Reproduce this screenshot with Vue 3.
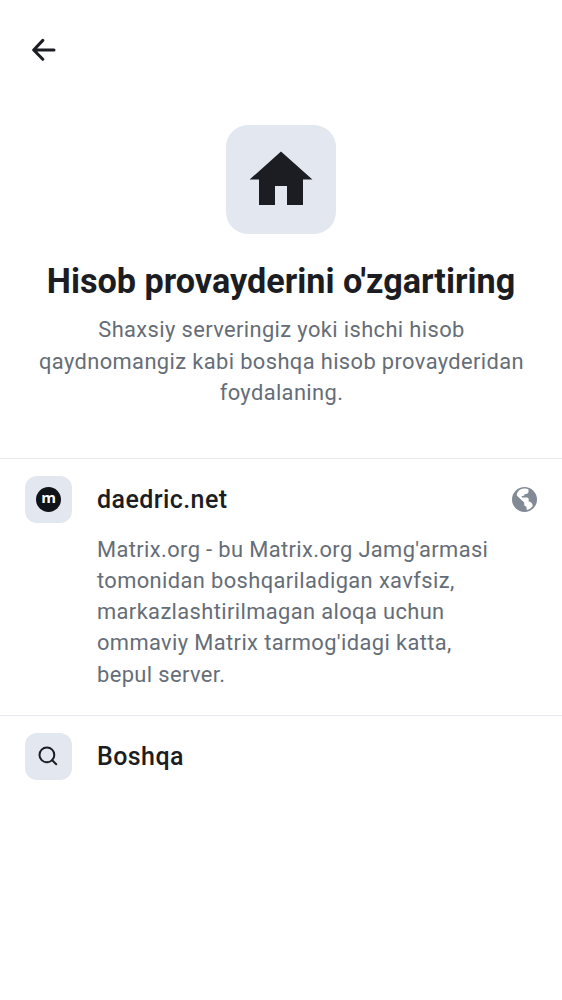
<script setup>
const description = "Matrix.org - bu Matrix.org Jamg'armasi tomonidan boshqariladigan xavfsiz, markazlashtirilmagan aloqa uchun ommaviy Matrix tarmog'idagi katta, bepul server."
</script>

<template>
  <main class="screen">
    <header class="bar">
      <svg class="back" viewBox="0 0 24 24"><path d="M10.8 2.4 1.7 12l9.1 9.3M2 12H22" /></svg>
    </header>
    <section class="hero">
      <div class="tile">
        <svg viewBox="0 0 64 54"><path d="M32 .5.6 28.6H10v25.3h16v-19h12v19h16V28.6h9.4z" /></svg>
      </div>
      <h1>Hisob provayderini o'zgartiring</h1>
      <p>Shaxsiy serveringiz yoki ishchi hisob qaydnomangiz kabi boshqa hisob provayderidan foydalaning.</p>
    </section>
    <section class="row first">
      <div class="icon"><span class="logo">m</span></div>
      <div class="body">
        <h2>daedric.net</h2>
        <p>{{ description }}</p>
      </div>
      <svg class="globe" viewBox="0 0 25 25"><circle cx="12.5" cy="12.5" r="12.5" /><path d="M4.7 8.3C5 5 7.5 1.8 12 1.6c2-.1 3.4.3 4.5 1v2.2c-.2 1.5-1 2-2.3 2.1l-1.8.3v1.4l-2.9.7.5 1.3h4.7c1.4 0 2 .8 2 2v1.8c1.7.2 2.8 1 3.5 2.6l.6 2c-1.4 2-3.3 3.3-6 3.9l-.4-3.2c-1.7-.2-2.2-1.1-2.2-2.6v-1.6L5.8 9.5z" /></svg>
    </section>
    <section class="row">
      <div class="icon"><svg class="search" viewBox="0 0 20 20"><circle cx="8.9" cy="8.9" r="7.4" /><path d="m14.2 14.2 4 4" /></svg></div>
      <div class="body"><h2>Boshqa</h2></div>
    </section>
  </main>
</template>

<style>
body { background: #fff; }
</style>
<style scoped>
.screen { height: 1000px; font-family: Roboto, sans-serif; color: #1b1d22; background: #fff; overflow: hidden; }
.bar { height: 100px; box-sizing: border-box; padding: 38px 0 0 32px; }
.back { display: block; width: 24px; height: 24px; fill: none; stroke: #1b1d22; stroke-width: 3; stroke-linecap: round; stroke-linejoin: round; }
.hero { display: flex; flex-direction: column; align-items: center; height: 358px; box-sizing: border-box; padding-top: 25px; text-align: center; }
.tile { width: 110px; height: 109.3px; border-radius: 22px; background: #e3e8f0; display: flex; align-items: center; justify-content: center; flex: none; }
.tile svg { width: 64px; height: 54px; fill: #1b1d22; margin-bottom: 3.3px; }
h1 { margin: 25.4px 0 0; font-size: 34.2px; line-height: 42px; font-weight: 700; white-space: nowrap; }
p { margin: 0; font-size: 21.86px; line-height: 31.2px; letter-spacing: .39px; color: #656d77; }
.hero p { width: 500px; margin-top: 12.7px; padding-left: 1px; }
.row { display: flex; align-items: flex-start; border-top: 1px solid #e6e9ef; padding: 17px 25px 0; box-sizing: border-box; }
.first { height: 257px; }
.icon { width: 47px; height: 47px; border-radius: 12px; background: #e3e8f0; display: flex; align-items: center; justify-content: center; }
.body { margin-left: 25px; width: 400px; }
h2 { margin: 0; font-size: 25px; line-height: 47px; font-weight: 500; letter-spacing: .42px; }
.body p { margin-top: 10.8px; }
.logo { width: 25px; height: 25px; border-radius: 50%; background: #101317; color: #fff; font: bold 15px/21px "Open Sans", sans-serif; text-align: center; }
.globe { width: 25px; height: 25px; margin: 11px 0 0 auto; fill: #818a95; }
.globe path { fill: #fff; }
.search { width: 20px; height: 20px; margin: 0 1.4px 1px 0; fill: none; stroke: #1b1d22; stroke-width: 2; stroke-linecap: round; }
</style>
